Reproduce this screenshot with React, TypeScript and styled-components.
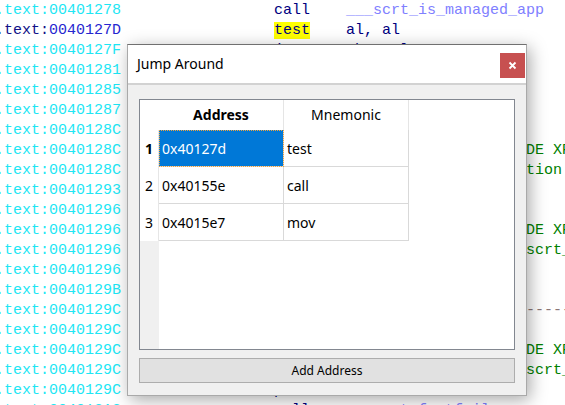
import React from "react";
import styled, { createGlobalStyle } from "styled-components";

const GlobalStyle = createGlobalStyle`
  html, body { margin: 0; padding: 0; background: #ffffff; }
  body { width: 565px; height: 405px; overflow: hidden; }
`;

const Screen = styled.div`
  position: relative;
  width: 565px;
  height: 405px;
  overflow: hidden;
  background: #ffffff;
`;

/* ---------- disassembly listing (background) ---------- */

const Listing = styled.div`
  margin-left: -5px;
  padding-top: 1px;
  font-family: "Liberation Mono", monospace;
  font-size: 15px;
  line-height: 20px;
  white-space: pre;
`;

const Line = styled.div`
  height: 20px;
`;

type Tone =
  | "plain"
  | "seg"
  | "addr"
  | "segCur"
  | "addrCur"
  | "mnem"
  | "op"
  | "name"
  | "comment"
  | "sep";

const toneColor: Record<Tone, string> = {
  plain: "#000080",
  seg: "#1ee6f4",
  addr: "#1ee6f4",
  segCur: "#101088",
  addrCur: "#2626d0",
  mnem: "#000080",
  op: "#000080",
  name: "#8080ff",
  comment: "#008000",
  sep: "#8a7676",
};

const Seg = styled.span<{ $tone: Tone; $hl?: boolean }>`
  color: ${(p) => toneColor[p.$tone]};
  background: ${(p) => (p.$hl ? "#ffff00" : "transparent")};
`;

type Row = {
  a: string;
  cur?: boolean;
  m?: string;
  hl?: boolean;
  o?: string;
  ot?: Tone;
  c?: string;
  cc?: number;
  ct?: Tone;
};

const rows: Row[] = [
  { a: "00401278", m: "call", o: "___scrt_is_managed_app", ot: "name" },
  { a: "0040127D", cur: true, m: "test", hl: true, o: "al, al" },
  { a: "0040127F", m: "jz", o: "short loc_4012A2" },
  { a: "00401281", m: "push", o: "1" },
  { a: "00401285", m: "call", o: "__cexit", ot: "name" },
  { a: "00401287", m: "pop", o: "ecx" },
  { a: "0040128C" },
  { a: "0040128C", c: "; CODE XREF: __scrt_common_main_seh+A", cc: 55 },
  { a: "0040128C", c: "; Function chunk", cc: 53 },
  { a: "00401293", m: "mov", o: "eax, esi" },
  { a: "00401296" },
  { a: "00401296", c: "; CODE XREF: __scrt_common_main_seh+5", cc: 55 },
  { a: "00401296", c: "; __scrt_common_main_seh+F6", cc: 55 },
  { a: "00401296", m: "jmp", o: "short loc_4012B7" },
  { a: "0040129B", m: "push", o: "eax" },
  { a: "0040129C", c: "; " + "-".repeat(60), cc: 31, ct: "sep" },
  { a: "0040129C" },
  { a: "0040129C", c: "; CODE XREF: __scrt_common_main_seh+8", cc: 55 },
  { a: "0040129C", c: "; __scrt_common_main_seh+1A", cc: 55 },
  { a: "0040129C", m: "push", o: "7" },
  { a: "004012A2", m: "call", o: "___scrt_fastfail", ot: "name" },
];

type Piece = { text: string; tone: Tone; hl?: boolean };

function buildPieces(r: Row): Piece[] {
  const out: Piece[] = [];
  let col = 0;
  const push = (text: string, tone: Tone, hl?: boolean) => {
    out.push({ text, tone, hl });
    col += text.length;
  };
  const padTo = (n: number) => {
    if (n > col) push(" ".repeat(n - col), "plain");
  };
  push(".text:", r.cur ? "segCur" : "seg");
  push(r.a, r.cur ? "addrCur" : "addr");
  if (r.m) {
    padTo(31);
    push(r.m, "mnem", r.hl);
    if (r.o) {
      padTo(39);
      push(r.o, r.ot || "op");
    }
  }
  if (r.c) {
    padTo(r.cc || 55);
    push(r.c, r.ct || "comment");
  }
  return out;
}

/* ---------- dialog ---------- */

const Dialog = styled.div`
  position: absolute;
  left: 127px;
  top: 44px;
  width: 400px;
  height: 352px;
  box-sizing: border-box;
  display: flex;
  flex-direction: column;
  border: 1px solid #a9a9a9;
  border-top-color: #707070;
  background: #f0f0f0;
  box-shadow: 3px 4px 16px rgba(0, 0, 0, 0.34);
  font-family: "Noto Sans", sans-serif;
  color: #000000;
`;

const TitleBar = styled.div`
  flex: none;
  height: 38px;
  display: flex;
  align-items: flex-start;
  background: #ffffff;
  border-bottom: 2px solid #d2d2d2;
`;

const Title = styled.div`
  flex: 1;
  padding-left: 9px;
  line-height: 38px;
  font-size: 14px;
`;

const CloseButton = styled.div`
  width: 25px;
  height: 25px;
  margin-top: 8px;
  margin-right: 1px;
  background: #c75050;
  display: flex;
  align-items: center;
  justify-content: center;
`;

const Body = styled.div`
  flex: 1;
  display: flex;
  flex-direction: column;
  gap: 8px;
  padding: 14px 11px 12px;
`;

const TableFrame = styled.div`
  flex: 1;
  display: grid;
  grid-template-columns: 19px 125px 125px 1fr;
  grid-template-rows: 30px 37px 37px 37px 1fr;
  border: 1px solid #828790;
  background: #ffffff;
  font-size: 14px;
`;

const Corner = styled.div`
  background: #ffffff;
`;

const HeaderCell = styled.div<{ $bold?: boolean }>`
  display: flex;
  align-items: center;
  justify-content: center;
  border-right: 1px solid #e5e5e5;
  font-weight: ${(p) => (p.$bold ? 700 : 400)};
  padding-bottom: 2px;
`;

const Fill = styled.div`
  background: #ffffff;
`;

const RowHeader = styled.div<{ $bold?: boolean }>`
  display: flex;
  align-items: center;
  justify-content: center;
  border-right: 1px solid #e6e6e6;
  font-weight: ${(p) => (p.$bold ? 700 : 400)};
`;

const Cell = styled.div<{ $selected?: boolean }>`
  display: flex;
  align-items: center;
  padding-left: 3px;
  border-right: 1px solid #d9d9d9;
  border-bottom: 1px solid #d9d9d9;
  background: ${(p) => (p.$selected ? "#0078d7" : "#ffffff")};
  color: ${(p) => (p.$selected ? "#ffffff" : "#000000")};
  outline: ${(p) => (p.$selected ? "1px dotted #f2a33a" : "none")};
  outline-offset: -1px;
`;

const GutterFill = styled.div`
  background: #f0f0f0;
  border-right: 1px solid #f0f0f0;
`;

const Button = styled.div`
  flex: none;
  height: 25px;
  box-sizing: border-box;
  border: 1px solid #adadad;
  background: #e1e1e1;
  display: flex;
  align-items: center;
  justify-content: center;
  font-size: 12px;
  padding-bottom: 1px;
`;

const entries = [
  { addr: "0x40127d", mnem: "test" },
  { addr: "0x40155e", mnem: "call" },
  { addr: "0x4015e7", mnem: "mov" },
];

export default function App() {
  return (
    <Screen>
      <GlobalStyle />
      <Listing>
        {rows.map((r, i) => (
          <Line key={i}>
            {buildPieces(r).map((p, j) => (
              <Seg key={j} $tone={p.tone} $hl={p.hl}>
                {p.text}
              </Seg>
            ))}
          </Line>
        ))}
      </Listing>

      <Dialog>
        <TitleBar>
          <Title>Jump Around</Title>
          <CloseButton>
            <svg width="9" height="9" viewBox="0 0 9 9">
              <path d="M1.5 1.5 L7.5 7.5 M7.5 1.5 L1.5 7.5" stroke="#ffffff" strokeWidth="1.8" />
            </svg>
          </CloseButton>
        </TitleBar>
        <Body>
          <TableFrame>
            <Corner />
            <HeaderCell $bold>Address</HeaderCell>
            <HeaderCell>Mnemonic</HeaderCell>
            <Fill />
            {entries.map((e, i) => (
              <React.Fragment key={e.addr}>
                <RowHeader $bold={i === 0}>{i + 1}</RowHeader>
                <Cell $selected={i === 0}>{e.addr}</Cell>
                <Cell>{e.mnem}</Cell>
                <Fill />
              </React.Fragment>
            ))}
            <GutterFill />
            <Fill />
          </TableFrame>
          <Button>Add Address</Button>
        </Body>
      </Dialog>
    </Screen>
  );
}
